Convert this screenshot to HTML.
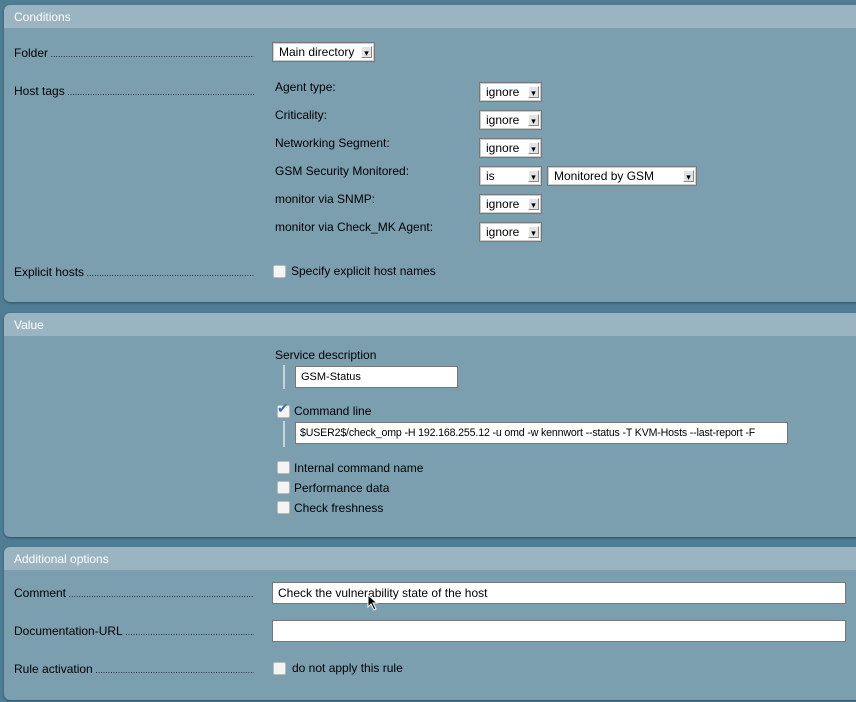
<!DOCTYPE html>
<html><head><style>
body{margin:0;width:856px;height:702px;overflow:hidden;background:#4f7d94;font-family:"Liberation Sans",sans-serif;font-size:12px;color:#000;position:relative}
.p{position:absolute;left:4px;width:860px;background:#7c9fb0;border-radius:6px;box-shadow:0 1px 2px #2d4f60}
.h{height:23px;line-height:24px;background:#9bb4c1;color:#fff;padding-left:10px;border-radius:6px 6px 0 0;font-size:12px}
.a{position:absolute;white-space:nowrap}
.l{position:absolute;left:14px;width:240px;white-space:nowrap;overflow:hidden}
.l:after{content:" ......................................................................................................";font-size:9px;letter-spacing:0;color:#223}
.s{position:absolute;height:20px;background:#fff;border:1px solid #777;box-shadow:inset 0 0 0 1px #ccc;box-sizing:border-box;line-height:18px;padding-left:6px}
.s:after{content:"▾";position:absolute;right:2px;top:3px;width:11px;height:12px;background:#e4e4e4;border:1px solid #888;border-top-color:#fff;border-left-color:#fff;font-size:9px;line-height:12px;text-align:center;box-sizing:border-box}
.i{position:absolute;height:22px;background:#fff;border:1px solid #777;box-sizing:border-box;line-height:20px;padding-left:5px;font-size:11px;white-space:nowrap;overflow:hidden}
.c{position:absolute;width:11px;height:11px;background:#f4f4f4;border:1px solid #bbb;border-radius:2px}
.bar{position:absolute;width:2px;background:#c8d4da}
</style></head><body>
<div class="p" style="top:5px;height:297px"><div class="h">Conditions</div></div>
<div class="p" style="top:313px;height:224px"><div class="h">Value</div></div>
<div class="p" style="top:547px;height:153px"><div class="h">Additional options</div></div>

<div class="l" style="top:46px">Folder</div>
<div class="s" style="left:272px;top:42px;width:103px">Main directory</div>
<div class="l" style="top:84px">Host tags</div>
<div class="a" style="left:275px;top:80px">Agent type:</div>
<div class="a" style="left:275px;top:108px">Criticality:</div>
<div class="a" style="left:275px;top:136px">Networking Segment:</div>
<div class="a" style="left:275px;top:164px">GSM Security Monitored:</div>
<div class="a" style="left:275px;top:192px">monitor via SNMP:</div>
<div class="a" style="left:275px;top:220px">monitor via Check_MK Agent:</div>
<div class="s" style="left:479px;top:82px;width:63px">ignore</div>
<div class="s" style="left:479px;top:110px;width:63px">ignore</div>
<div class="s" style="left:479px;top:138px;width:63px">ignore</div>
<div class="s" style="left:479px;top:166px;width:63px">is</div>
<div class="s" style="left:547px;top:166px;width:150px">Monitored by GSM</div>
<div class="s" style="left:479px;top:194px;width:63px">ignore</div>
<div class="s" style="left:479px;top:222px;width:63px">ignore</div>
<div class="l" style="top:265px">Explicit hosts</div>
<div class="c" style="left:273px;top:265px"></div>
<div class="a" style="left:291px;top:264px">Specify explicit host names</div>

<div class="a" style="left:275px;top:348px">Service description</div>
<div class="bar" style="left:283px;top:365px;height:24px"></div>
<div class="i" style="left:295px;top:366px;width:163px">GSM-Status</div>
<div class="c" style="left:277px;top:405px"></div>
<div class="a" style="left:277px;top:400px;color:#3a6fb5;font-size:14px">✔</div>
<div class="a" style="left:294px;top:404px">Command line</div>
<div class="bar" style="left:283px;top:421px;height:26px"></div>
<div class="i" style="left:295px;top:422px;width:493px;font-size:10.6px;letter-spacing:-0.15px;padding-left:4px">$USER2$/check_omp -H 192.168.255.12 -u omd -w kennwort --status -T KVM-Hosts --last-report -F</div>
<div class="c" style="left:277px;top:461px"></div><div class="a" style="left:294px;top:461px">Internal command name</div>
<div class="c" style="left:277px;top:481px"></div><div class="a" style="left:294px;top:481px">Performance data</div>
<div class="c" style="left:277px;top:501px"></div><div class="a" style="left:294px;top:501px">Check freshness</div>

<div class="l" style="top:586px">Comment</div>
<div class="i" style="left:272px;top:582px;width:574px;font-size:12px">Check the vulnerability state of the host</div>
<div class="l" style="top:624px">Documentation-URL</div>
<div class="i" style="left:272px;top:620px;width:574px"></div>
<div class="l" style="top:662px">Rule activation</div>
<div class="c" style="left:273px;top:662px"></div>
<div class="a" style="left:292px;top:661px">do not apply this rule</div>
<svg class="a" style="left:367px;top:594px" width="12" height="18"><path d="M1 1 L1 13 L4 10 L7 16 L9 15 L6 9 L10 9 Z" fill="#000" stroke="#fff" stroke-width="1"/></svg>
</body></html>
